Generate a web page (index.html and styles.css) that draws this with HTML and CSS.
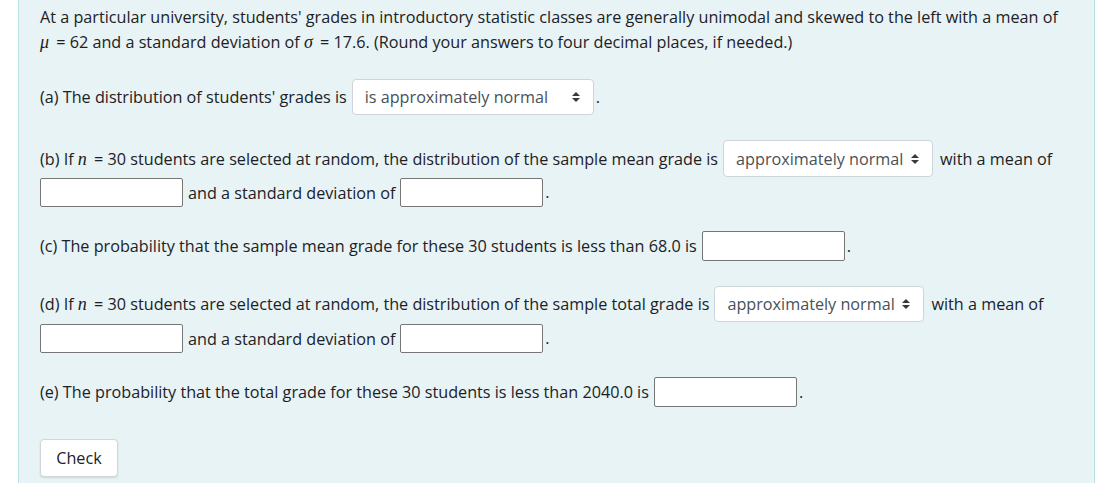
FILE: index.html
```html
<!DOCTYPE html>
<html lang="en">
<head>
<meta charset="utf-8">
<title>Question</title>
<link rel="stylesheet" href="styles.css">
</head>
<body>
<div class="panel">
  <div class="intro">
    <span>At a particular university, students' grades in introductory statistic classes are generally unimodal and skewed to the left with a mean of</span><br>
    <span><span class="math">μ</span> = 62 and a standard deviation of <span class="math">σ</span> = 17.6. (Round your answers to four decimal places, if needed.)</span>
  </div>

  <div class="row row-a">
    <span>(a) The distribution of students' grades is</span>
    <select class="sel sel-wide"><option>is approximately normal</option></select>
    <span class="dot">.</span>
  </div>

  <div class="row row-b1">
    <span>(b) If <span class="math">n</span> = 30 students are selected at random, the distribution of the sample mean grade is</span>
    <select class="sel"><option>approximately normal</option></select>
    <span class="after-sel">with a mean of</span>
  </div>
  <div class="row row-b2">
    <input class="ans" type="text">
    <span class="mid">and a standard deviation of</span>
    <input class="ans" type="text">
    <span class="dot">.</span>
  </div>

  <div class="row row-c">
    <span>(c) The probability that the sample mean grade for these 30 students is less than 68.0 is</span>
    <input class="ans" type="text">
    <span class="dot">.</span>
  </div>

  <div class="row row-d1">
    <span>(d) If <span class="math">n</span> = 30 students are selected at random, the distribution of the sample total grade is</span>
    <select class="sel"><option>approximately normal</option></select>
    <span class="after-sel">with a mean of</span>
  </div>
  <div class="row row-d2">
    <input class="ans" type="text">
    <span class="mid">and a standard deviation of</span>
    <input class="ans" type="text">
    <span class="dot">.</span>
  </div>

  <div class="row row-e">
    <span>(e) The probability that the total grade for these 30 students is less than 2040.0 is</span>
    <input class="ans" type="text">
    <span class="dot">.</span>
  </div>

  <div class="actions">
    <button class="check" type="button">Check</button>
  </div>
</div>
</body>
</html>
```

FILE: styles.css
```css
html, body {
  margin: 0;
  padding: 0;
  background: #ffffff;
}

body {
  font-family: "Open Sans", "Noto Sans", sans-serif;
  font-size: 16.2px;
  color: #1d2125;
}

.panel {
  margin-left: 18px;
  width: 1077px;
  box-sizing: border-box;
  min-height: 483px;
  background: #e7f3f5;
  border-left: 1px solid #b8e0e6;
  border-right: 1px solid #b8e0e6;
  padding: 5px 10px 0 21px;
}

.intro {
  line-height: 25px;
  white-space: nowrap;
}

.math {
  font-family: "Liberation Serif", "DejaVu Serif", serif;
  font-style: italic;
  font-size: 18px;
  margin-right: 3px;
}

.row {
  display: flex;
  align-items: center;
  white-space: nowrap;
}

.row-a { margin-top: 24px; height: 36px; }
.row-b1 { margin-top: 25px; height: 37px; }
.row-b2 { margin-top: 1px; height: 29px; }
.row-c { margin-top: 24px; height: 30px; }
.row-d1 { margin-top: 25px; height: 36px; }
.row-d2 { margin-top: 2px; height: 29px; }
.row-e { margin-top: 24px; height: 30px; }

.sel {
  -webkit-appearance: none;
  appearance: none;
  height: 100%;
  box-sizing: border-box;
  margin: 0 7px 0 5px;
  padding: 0 28px 0 12px;
  font-family: inherit;
  font-size: 16.2px;
  color: #495057;
  background-color: #ffffff;
  background-image: url("data:image/svg+xml,%3csvg xmlns='http://www.w3.org/2000/svg' width='4' height='5' viewBox='0 0 4 5'%3e%3cpath fill='%23343a40' d='M2 0L0 2h4zm0 5L0 3h4z'/%3e%3c/svg%3e");
  background-repeat: no-repeat;
  background-position: right 13px center;
  background-size: 8px 10px;
  border: 1px solid #ced4da;
  border-radius: 4px;
}

.sel-wide {
  width: 242px;
  margin-right: 2px;
}

.ans {
  width: 143px;
  height: 100%;
  box-sizing: border-box;
  margin: 0 2px 0 5px;
  padding: 0 4px;
  border: 1px solid #767676;
  border-radius: 2px;
  background: #ffffff;
  font-family: inherit;
  font-size: 16px;
}

.row-b2 .ans:first-child,
.row-d2 .ans:first-child {
  margin-left: 0;
  margin-right: 5px;
}

.dot { line-height: 1; }

.actions {
  margin-top: 32px;
}

.check {
  width: 78px;
  height: 38px;
  box-sizing: border-box;
  font-family: inherit;
  font-size: 16.2px;
  color: #1d2125;
  background: #ffffff;
  border: 1px solid #d3d6d9;
  border-radius: 4px;
  box-shadow: 0 1px 2px rgba(0, 0, 0, 0.12);
  padding: 0;
}
```
